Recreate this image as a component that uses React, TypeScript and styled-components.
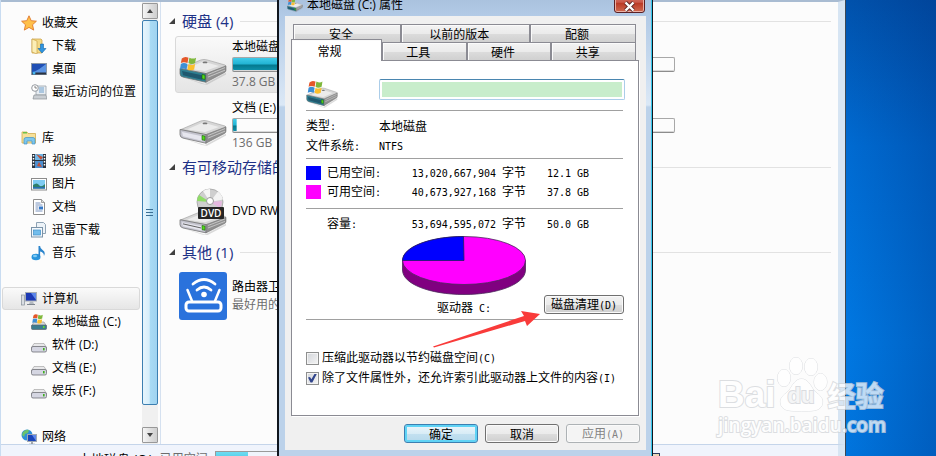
import React from "react";
import styled, { createGlobalStyle, css } from "styled-components";

const uiFont = '"Open Sans", "Noto Sans CJK SC", sans-serif';
const cjkFont = '"Noto Sans CJK SC", sans-serif';

const GlobalStyle = createGlobalStyle`
  * { box-sizing: border-box; }
  body { margin: 0; overflow: hidden; }
  button, input { font: inherit; margin: 0; }
  a { color: inherit; text-decoration: none; }
`;

/* ---------- desktop and explorer window ---------- */

const Desktop = styled.div`
  position: relative;
  display: flex;
  height: 100vh;
  padding-right: 90px;
  overflow: hidden;
  font: 12px/16px ${uiFont};
  color: #000;
  background: linear-gradient(to left, rgba(0, 35, 110, 0.28), rgba(0, 35, 110, 0) 90px),
    linear-gradient(#0152ac, #006bd2 32%, #0078e2 75%, #0074dd);
`;

const ExplorerWindow = styled.main`
  flex: 1;
  min-width: 0;
  display: flex;
  flex-direction: column;
  background: #fcfcfc;
  border-left: 1px solid #c9dcf1;
  border-right: 1px solid #3d4956;
`;

const ExplorerBody = styled.div`
  flex: 1;
  min-height: 0;
  display: flex;
  border-top: 2px solid #a9bcd2;
  border-right: 7px solid #d7e5f3;
`;

const Sidebar = styled.nav`
  width: 141px;
  flex: none;
  padding: 9px 2px 0 1px;
  overflow: hidden;
`;

const NavList = styled.ul`
  list-style: none;
  margin: 0 0 23px;
  padding: 0;
`;

const NavLink = styled.a<{ $nested?: boolean; $selected?: boolean }>`
  display: flex;
  align-items: center;
  gap: 5px;
  height: 23px;
  padding-left: ${(p) => (p.$nested ? 28 : 18)}px;
  border: 1px solid transparent;
  white-space: nowrap;
  ${(p) =>
    p.$selected &&
    css`
      border-color: #d9d9d9;
      border-radius: 3px;
      background: linear-gradient(#fafafa, #e6e6e6);
    `}
  svg { flex: none; }
`;

const Scrollbar = styled.div`
  width: 16px;
  flex: none;
  display: flex;
  flex-direction: column;
  background: #f0f0f0;
  padding: 1px 0;
`;

const ScrollButton = styled.button`
  height: 16px;
  padding: 0;
  flex: none;
  display: grid;
  place-items: center;
  border: 1px solid #989898;
  border-radius: 1px;
  background: linear-gradient(to right, #f5f5f5, #dcdcdc 60%, #cfcfcf);
`;

const ScrollThumb = styled.div`
  flex: 1;
  display: grid;
  place-items: center;
  margin: 1px 0 22px;
  border: 1px solid #3c7fb1;
  border-radius: 2px;
  background: linear-gradient(to right, #e6f5fd, #d5eefb 45%, #a9dbf5 50%, #a0d3f0);
`;

const Content = styled.section`
  flex: 1;
  min-width: 0;
  margin-left: 2px;
  padding: 6px 7px 0 8px;
  border-left: 1px solid #d5e1f0;
`;

const GroupHeader = styled.h2`
  display: flex;
  align-items: center;
  gap: 7px;
  height: 26px;
  margin: 0 0 2px;
  font-size: 15px;
  font-weight: 400;
  color: #1e3287;
  white-space: nowrap;
  &::after {
    content: "";
    flex: 1;
    height: 1px;
    background: #e2e2e2;
  }
`;

const TileGrid = styled.div`
  display: grid;
  grid-template-columns: 250px 250px;
  column-gap: 8px;
  row-gap: 4px;
  padding-left: 6px;
`;

const Tile = styled.div<{ $selected?: boolean }>`
  display: flex;
  align-items: center;
  gap: 5px;
  height: 57px;
  padding: 0 3px;
  border: 1px solid transparent;
  white-space: nowrap;
  ${(p) =>
    p.$selected &&
    css`
      border-color: #d9d9d9;
      border-radius: 3px;
      background: linear-gradient(#fafafa, #e5e5e5);
    `}
  svg { flex: none; }
`;

const TileText = styled.div`
  flex: 1;
  max-width: 185px;
  display: flex;
  flex-direction: column;
  gap: 2px;
`;

const Muted = styled.span`
  color: #6d6d6d;
`;

const CapacityBar = styled.div<{ $fill: number }>`
  height: 15px;
  border: 1px solid #a8a8a8;
  border-bottom-color: #8c8c8c;
  border-radius: 2px;
  box-shadow: inset 0 -1px #d8d8d8;
  background: linear-gradient(#41cbe8, #22b4d4 45%, #04798f 55%, #1093ad) no-repeat 0 0 /
    ${(p) => p.$fill}% 100%;
`;

const LoneBar = styled.div`
  margin: 21px 0 0 56px;
  width: 186px;
`;

const StatusBar = styled.footer`
  display: flex;
  align-items: flex-start;
  gap: 7px;
  height: 12px;
  padding: 6px 178px 0 77px;
  overflow: hidden;
  white-space: nowrap;
  border-top: 1px solid #c5d5ea;
  border-right: 7px solid #d7e5f3;
  background: #f0f4fc;
`;

const StatusName = styled.span`
  font-size: 13px;
`;

const StatusMeter = styled.div`
  width: 120px;
  height: 16px;
  border: 1px solid #9a9a9a;
  background: linear-gradient(#6fdcf2, #30bddb) no-repeat 0 0 / 32px 100%;
`;

const StatusEmblem = styled.span`
  width: 16px;
  height: 16px;
  margin: 2px 0 0 auto;
  border: 1px solid #2b3a5c;
  background: linear-gradient(to right, #cfe3f6, #f3d3a8);
`;

/* ---------- properties dialog ---------- */

const Dialog = styled.section`
  position: absolute;
  left: 277px;
  top: -14px;
  width: 376px;
  height: 480px;
  padding: 0 6px;
  font: 12px/16px ${cjkFont};
  border: 1px solid #10161e;
  border-left-width: 2px;
  border-top: 0;
  box-shadow: inset -1px 0 #35c7ec;
  background: linear-gradient(#a3bcd8, #b2cae6 30px, #dbe8f6 119px, #bcd2ea 121px, #bcd2ea);
`;

const TitleBar = styled.header`
  display: flex;
  align-items: flex-end;
  gap: 4px;
  height: 30px;
  padding: 0 1px 2px 2px;
  font-family: ${uiFont};
`;

const DialogTitle = styled.h1`
  flex: 1;
  margin: 0;
  font-size: 12px;
  line-height: 18px;
  font-weight: 400;
`;

const CloseButton = styled.button`
  width: 31px;
  height: 26px;
  margin-bottom: 1px;
  padding: 12px 0 0;
  display: grid;
  place-items: center;
  border: 1px solid #5b2024;
  border-radius: 0 0 3px 3px;
  box-shadow: inset 0 0 0 1px #eab0a4;
  background: linear-gradient(#e7a092, #c9584a 60%, #b93824 62%, #d06a50);
`;

const Client = styled.div`
  height: 434px;
  padding: 8px 7px 7px 6px;
  background: #f0f0f0;
`;

const BackTabs = styled.div`
  display: flex;
  height: 18px;
  margin: 0 3px 0 2px;
`;

const FrontTabs = styled.div`
  display: flex;
  height: 18px;
  margin-right: 3px;
`;

const Tab = styled.button<{ $grow?: number; $active?: boolean }>`
  flex: ${(p) => p.$grow ?? 1} 1 0;
  min-width: 0;
  padding: 0 12px 0 0;
  border: 1px solid #8b8b93;
  border-bottom: 0;
  background: linear-gradient(#f3f3f3, #ebebeb 50%, #dcdcdc 52%, #d0d0d0);
  box-shadow: inset 1px 1px #fbfbfb;
  & + & { border-left-width: 1px; }
  ${(p) =>
    p.$active &&
    css`
      flex: 0 0 91px;
      height: 22px;
      margin-top: -3px;
      padding-right: 14px;
      position: relative;
      z-index: 1;
      background: #fff;
      & + button { border-left-width: 0; }
    `}
`;

const Panel = styled.div`
  padding: 0 15px 0 14px;
  height: 356px;
  border: 1px solid #8b8b93;
  background: #fff;
  box-shadow: 1px 1px #fff;
`;

const Divider = styled.hr`
  height: 1px;
  margin: 0;
  border: 0;
  background: #a0a0a0;
`;

const VolumeRow = styled.div`
  display: flex;
  align-items: flex-start;
  justify-content: space-between;
  height: 49px;
  padding-top: 18px;
`;

const VolumeInput = styled.input`
  width: 246px;
  height: 21px;
  margin-right: -2px;
  padding: 2px;
  border: 1px solid #abcde9;
  border-top-color: #4a86b0;
  border-radius: 2px;
  background: linear-gradient(#c8edcb, #c8edcb) content-box, #fff;
`;

const Facts = styled.dl`
  display: grid;
  grid-template-columns: 73px 1fr;
  grid-auto-rows: 20px;
  align-items: center;
  margin: 0;
  padding: 5px 0 2px;
  dd { margin: 0; }
`;

const Mono = styled.span`
  font: 10px/16px "DejaVu Sans Mono", monospace;
`;

const SpaceTable = styled.table<{ $top: number; $bottom: number }>`
  width: 100%;
  table-layout: fixed;
  border-collapse: collapse;
  margin: ${(p) => p.$top}px 0 ${(p) => p.$bottom}px;
  th, td { height: 19px; padding: 0; font-weight: 400; text-align: left; white-space: nowrap; }
`;

const SwatchCell = styled.td`
  width: 21px;
`;

const NameCell = styled.th`
  width: 72px;
`;

const BytesCell = styled.td`
  width: 127px;
  && { text-align: right; }
`;

const SizeCell = styled.td`
  && { padding-left: 21px; }
`;

const Swatch = styled.span<{ $color: string }>`
  display: block;
  width: 15px;
  height: 14px;
  background: ${(p) => p.$color};
`;

const ChartRow = styled.div`
  display: grid;
  grid-template-columns: 96px 124px 1fr;
  align-items: end;
  padding-top: 3px;
`;

const Chart = styled.figure`
  grid-column: 2;
  margin: 0;
  text-align: center;
  svg { display: block; }
`;

const Caption = styled.figcaption`
  padding: 4px 0 2px;
`;

const Button = styled.button<{ $kind?: "default" | "disabled" }>`
  width: 74px;
  height: 19px;
  padding: 0;
  line-height: 16px;
  color: #000;
  border: 1px solid #707070;
  border-radius: 3px;
  box-shadow: inset 0 0 0 1px #fafafa;
  background: linear-gradient(#f2f2f2, #ebebeb 50%, #dddddd 52%, #cfcfcf);
  ${(p) =>
    p.$kind === "default" &&
    css`
      border-color: #3c7fb1;
      box-shadow: inset 0 0 0 2px #5fd3f5;
      background: linear-gradient(#edf6fb, #d8ecf6 50%, #c3e0f0 52%, #b5d9ec);
    `}
  ${(p) =>
    p.$kind === "disabled" &&
    css`
      color: #838383;
      border-color: #adb2b5;
      background: #f4f4f4;
    `}
`;

const CleanupButton = styled(Button)`
  width: 80px;
  margin: 0 -1px 5px;
  justify-self: end;
`;

const Options = styled.div`
  padding-top: 28px;
`;

const Option = styled.label`
  display: flex;
  align-items: center;
  gap: 3px;
  height: 20px;
  white-space: nowrap;
`;

const CheckBox = styled.input`
  appearance: none;
  width: 13px;
  height: 13px;
  flex: none;
  display: grid;
  place-items: center;
  border: 1px solid #8e8f8f;
  background: linear-gradient(135deg, #d2d5da, #f4f4f4);
  box-shadow: inset 0 0 0 1px #f4f4f4;
  &:checked::before {
    content: "";
    width: 9px;
    height: 9px;
    background: #31458c;
    clip-path: polygon(0 45%, 22% 40%, 38% 65%, 75% 0, 100% 0, 48% 100%, 28% 100%);
  }
`;

const DialogButtons = styled.div`
  display: flex;
  justify-content: flex-end;
  gap: 7px;
  margin: 8px -1px 0 0;
`;

const Arrow = styled.svg`
  position: absolute;
  left: 432px;
  top: 308px;
`;

/* ---------- watermark ---------- */

const Watermark = styled.div`
  position: absolute;
  right: 46px;
  bottom: 18px;
  width: 172px;
  color: #fff;
  opacity: 0.75;
  white-space: nowrap;
  -webkit-text-stroke: 2px #d2d5d9;
  paint-order: stroke fill;
`;

const Brand = styled.div`
  display: flex;
  align-items: flex-end;
  height: 56px;
  font: 700 37px/34px "Liberation Sans", sans-serif;
`;

const Paw = styled.span`
  position: relative;
  width: 52px;
  height: 56px;
  svg { display: block; }
`;

const PawText = styled.span`
  position: absolute;
  left: 12px;
  top: 28px;
  font-size: 22px;
  line-height: 24px;
  color: #f2f3f4;
  -webkit-text-stroke: 2px #cfd2d7;
`;

const BrandCjk = styled.span`
  font: 700 28px/34px ${cjkFont};
`;

const Site = styled.div`
  font: 600 19px/26px "Open Sans", sans-serif;
`;

/* ---------- icons ---------- */

const FlagShapes = () => (
  <g>
    <path d="M4 4q3-3 7-1l-1 6q-4-2-7 0z" fill="#e4572a" />
    <path d="M12 3q4 2 7 0l-1 6q-4 2-7 0z" fill="#7fb83c" />
    <path d="M3 10q3-2 7 0l-1 6q-4-2-7 0z" fill="#3d8fd6" />
    <path d="M11 10q3 2 7 0l-1 6q-4 2-7 0z" fill="#fbbf2d" />
  </g>
);

const DriveShapes = ({ teal }: { teal?: boolean }) => (
  <g strokeLinejoin="round">
    <path d="M3 28l23 8 21-13v2L28 37l-5-1z" fill="#999" opacity=".35" />
    <path d="M2 18L22 8q3-1 6 0l18 6q2 1 0 2L27 24z" fill="#d6d6d6" stroke="#a0a0a0" strokeWidth=".7" />
    <path d="M8 18l16-8 16 5-14 6z" fill="#ececec" />
    <ellipse cx="26" cy="11" rx="2.500" ry="1" fill="#777" />
    <path d="M1 18l26 6v10L4 28q-3-1-3-4z" fill={teal ? "#2e7f92" : "#c4c4ce"} stroke="#6c6c6c" strokeWidth=".8" />
    <path d="M3 21l20 5v5L4 26z" fill={teal ? "#20586e" : "#e6e6ee"} />
    <path d="M27 24l20-9v5q0 2-2 3L27 34z" fill="#8f8f8f" stroke="#707070" strokeWidth=".6" />
    <path d="M29 25l17-8M29 28l17-8" stroke="#c9c9c9" />
    <path d="M23 25l3 .7v5L23 30z" fill="#52dc18" stroke="#1e5e10" strokeWidth=".7" />
  </g>
);

const BigDrive = ({ flag }: { flag?: boolean }) => (
  <svg width="48" height="48" viewBox="0 0 48 48" aria-hidden="true">
    <g transform="translate(0 12) scale(1 .86)"><DriveShapes teal={flag} /></g>
    {flag && <g transform="translate(-1 14) scale(.95 .9)"><FlagShapes /></g>}
  </svg>
);

const DialogDrive = ({ size }: { size: number }) => (
  <svg width={size} height={size} viewBox="0 -3 48 48" aria-hidden="true">
    <g transform="translate(0 3)"><DriveShapes teal /></g>
    <g transform="translate(0 -3) scale(1.3)"><FlagShapes /></g>
  </svg>
);

const DvdDrive = () => (
  <svg width="48" height="48" viewBox="0 0 48 48" aria-hidden="true">
    <g transform="translate(0 18) scale(1 .82)">
      <DriveShapes />
      <path d="M4 23l18 5" stroke="#555" />
    </g>
    <circle cx="31" cy="15" r="13" fill="#cfcfcf" stroke="#9a9a9a" strokeWidth=".7" />
    <path d="M31 15L20 8q-2 3-2 6z" fill="#8fdc67" />
    <path d="M31 15L39 4.500q4 3 5 8z" fill="#f3f3f3" />
    <path d="M31 15L24 4q3-2 7-2z" fill="#f5f5f5" />
    <path d="M31 15l12-1q0 4-2 7z" fill="#e4b8e0" />
    <circle cx="31" cy="14" r="3.500" fill="#fff" stroke="#999" />
    <rect x="19" y="20" width="26" height="12" rx="1" fill="#262626" />
    <text x="32" y="30" textAnchor="middle" fontFamily="Open Sans, sans-serif" fontSize="10" fontWeight="600" fill="#fff">DVD</text>
  </svg>
);

const RouterIcon = () => (
  <svg width="48" height="48" viewBox="0 0 48 48" fill="none" stroke="#fff" strokeLinecap="round" aria-hidden="true">
    <rect width="48" height="48" rx="3" fill="#2a72dc" stroke="none" />
    <rect x="7" y="30" width="35" height="9" rx="3" strokeWidth="3" />
    <path d="M13 29L8.500 18M36 29l4.500-11" strokeWidth="2.500" />
    <path d="M14 12q11-9 22 0M18 18q7-6 14 0" strokeWidth="2.800" />
    <circle cx="25" cy="22.500" r="2.800" fill="#fff" stroke="none" />
  </svg>
);

const paths: Record<string, React.ReactNode> = {
  star: <path d="M8 .8l2.200 4.900 5.200.5-3.900 3.600 1.200 5.300L8 12.400l-4.700 2.700 1.200-5.300L.6 6.200l5.200-.5z" fill="#ffc04a" stroke="#e0772a" strokeWidth=".9" />,
  download: (
    <>
      <path d="M1 1h9l1 1v13H1z" fill="#f3d987" stroke="#c79c3d" strokeWidth=".7" />
      <path d="M1 1l5 2v13l-5-2z" fill="#fbeeb6" stroke="#c79c3d" strokeWidth=".6" />
      <path d="M9.500 6h3v4.500H15L11 15 7 10.500h2.500z" fill="#2f95e0" stroke="#1566a8" strokeWidth=".6" />
    </>
  ),
  desktop: (
    <>
      <rect x=".5" y="2.500" width="15" height="11" fill="#1f4fb4" stroke="#8a98a8" />
      <path d="M1 12Q8 9 15 3v9z" fill="#5b93e2" />
      <rect x="1" y="11.500" width="14" height="2" fill="#2a3340" />
      <circle cx="3" cy="12" r="1.500" fill="#49b5ef" />
    </>
  ),
  recent: (
    <>
      <path d="M5 2h10v9H5z" fill="#e8edf2" stroke="#98a1aa" strokeWidth=".8" />
      <path d="M8 4h5M8 6h5M8 8h5" stroke="#6fa0cc" />
      <path d="M3 11h12l1 4H2z" fill="#c9ced3" stroke="#8a9096" strokeWidth=".7" />
      <circle cx="4" cy="4" r="3.300" fill="#fff" stroke="#8a9096" strokeWidth=".9" />
      <path d="M4 2v2h2" fill="none" stroke="#555" strokeWidth=".7" />
    </>
  ),
  library: (
    <>
      <path d="M1 2h5l1 1.500h7.500V13H1z" fill="#f7e19a" stroke="#d2ac4e" strokeWidth=".8" />
      <path d="M2 2h4v1.500H2z" fill="#6cc04a" />
      <path d="M3 14V9.500Q3 7.500 5 7.500h7q2 0 2 2V14h-3v-3H6v3z" fill="#7cc7ee" stroke="#4593c4" strokeWidth=".7" />
    </>
  ),
  video: (
    <>
      <rect x="1" y="1" width="14" height="14" fill="#2c3440" />
      <path d="M4 1h8v6H4z" fill="#71b6e6" />
      <path d="M4 8h8v7H4z" fill="#4c8fd0" />
      <path d="M5 1l5 6 2-3zM6 13l2-4 3 5z" fill="#c0513a" />
      <path d="M2.500 2v12M13.500 2v12" stroke="#fff" strokeWidth="1.500" strokeDasharray="1.500 1.500" />
    </>
  ),
  picture: (
    <>
      <rect x=".5" y="2.500" width="15" height="11.500" fill="#fff" stroke="#8c8c8c" />
      <rect x="2" y="4" width="12" height="8.500" fill="#7ecbf2" />
      <path d="M2 9q4-3 6 0t6-1v4.500H2z" fill="#2f7f6a" />
      <path d="M2 11h12v1.500H2z" fill="#2a6fb4" />
    </>
  ),
  document: (
    <>
      <path d="M2.500.5h8l3 3v12h-11z" fill="#fff" stroke="#8d8d8d" />
      <path d="M10.500.5v3h3" fill="#ddd" stroke="#8d8d8d" strokeWidth=".8" />
      <path d="M4.500 4h5M4.500 6h7M4.500 8h3M4.500 10h3M4.500 12h7" stroke="#6b88b8" strokeWidth=".9" />
      <rect x="8" y="7.500" width="4" height="3" fill="#3579c8" />
    </>
  ),
  thunder: (
    <>
      <path d="M5.500.5h7l2 2v9h-9z" fill="#edf3f8" stroke="#8ea3b5" />
      <rect x=".5" y="5.500" width="11" height="9.500" fill="#f5f9fc" stroke="#7b93a8" />
      <rect x="2.500" y="8" width="7" height="5" fill="#72bdec" stroke="#3f8fc8" strokeWidth=".7" />
    </>
  ),
  music: (
    <>
      <ellipse cx="5" cy="12" rx="4.500" ry="3.300" fill="#2a95dc" />
      <path d="M7.500 12V1h1.600q0 2.500 2.500 4 3.500 2.200 1.300 6 .3-3.500-3.800-4.500V12z" fill="#2a84cc" />
      <ellipse cx="4" cy="11" rx="2" ry="1.200" fill="#7fcaf4" />
    </>
  ),
  computer: (
    <>
      <rect x=".5" y="4" width="3" height="10" fill="#d9dde2" stroke="#87909a" strokeWidth=".7" />
      <rect x="4.500" y="1.500" width="11" height="8.500" fill="#1c39b4" stroke="#a6adb5" />
      <path d="M10 2h5v7z" fill="#5c86ea" />
      <path d="M9 10.500h3l1 2.500H8z" fill="#b4bac1" />
      <path d="M6 13.500h8" stroke="#7e858e" />
    </>
  ),
  systemDrive: (
    <>
      <path d="M3 8h10l2.500 4H.5z" fill="#d7dadd" stroke="#8c8c8c" strokeWidth=".6" />
      <rect x=".5" y="11" width="15" height="4.500" rx="1" fill="#3c7d90" stroke="#596670" strokeWidth=".7" />
      <rect x="12" y="12" width="1.500" height="2" fill="#5ee02c" />
      <g transform="translate(0 -1) scale(.62)"><FlagShapes /></g>
    </>
  ),
  drive: (
    <>
      <path d="M3 6.500h10l2.500 4H.5z" fill="#e8e8ea" stroke="#9c9c9c" strokeWidth=".6" />
      <rect x=".5" y="9.500" width="15" height="5.500" rx="1.500" fill="#d5d6e2" stroke="#6f7076" strokeWidth=".8" />
      <rect x="12" y="11" width="1.600" height="2.400" fill="#3fae1e" />
    </>
  ),
  network: (
    <>
      <circle cx="6" cy="6" r="5.500" fill="#2f8fd8" />
      <path d="M2 3q3-3 6-2l-1 3-3 1-1 3-2-2zM6 7l3-1v4l-3 1z" fill="#6cc36a" />
      <rect x="6.500" y="5.500" width="9" height="7" fill="#1a44b8" stroke="#a0a8b2" />
      <path d="M11 6h4v6z" fill="#5c86ea" />
      <path d="M11 13v2M8 15.500h6" stroke="#808891" strokeWidth="1.400" />
    </>
  ),
};

const SmallIcon = ({ name }: { name: string }) => (
  <svg width="16" height="16" viewBox="0 0 16 16" aria-hidden="true">{paths[name]}</svg>
);

const Expander = () => (
  <svg width="6" height="6" viewBox="0 0 6 6" aria-hidden="true"><path d="M6 0v6H0z" fill="#404040" /></svg>
);

const PieChart = () => (
  <svg width="124" height="59" viewBox="0 0 124 59" role="img" aria-label="驱动器 C:">
    <path d="M.5 24.500V34C.5 48 28 58.500 62 58.500S123.500 48 123.500 34v-9.500z" fill="#800080" stroke="#4a2a5a" strokeWidth=".8" />
    <ellipse cx="62" cy="24.500" rx="61.500" ry="24" fill="#f0f" stroke="#4a2a5a" strokeWidth=".8" />
    <path d="M62 24.500H.5C.5 11 28 .5 61.500.5z" fill="#00f" stroke="#202060" strokeWidth=".8" />
  </svg>
);

/* ---------- data ---------- */

type NavItem = { icon: string; label: string; selected?: boolean };

const navGroups: NavItem[][] = [
  [
    { icon: "star", label: "收藏夹" },
    { icon: "download", label: "下载" },
    { icon: "desktop", label: "桌面" },
    { icon: "recent", label: "最近访问的位置" },
  ],
  [
    { icon: "library", label: "库" },
    { icon: "video", label: "视频" },
    { icon: "picture", label: "图片" },
    { icon: "document", label: "文档" },
    { icon: "thunder", label: "迅雷下载" },
    { icon: "music", label: "音乐" },
  ],
  [
    { icon: "computer", label: "计算机", selected: true },
    { icon: "systemDrive", label: "本地磁盘 (C:)" },
    { icon: "drive", label: "软件 (D:)" },
    { icon: "drive", label: "文档 (E:)" },
    { icon: "drive", label: "娱乐 (F:)" },
  ],
  [{ icon: "network", label: "网络" }],
];

const usage = [
  { color: "#00f", label: "已用空间", bytes: "13,020,667,904", size: "12.1 GB" },
  { color: "#f0f", label: "可用空间", bytes: "40,673,927,168", size: "37.8 GB" },
];

const total = [{ color: "", label: "容量", bytes: "53,694,595,072", size: "50.0 GB" }];

const SpaceRows = ({ rows, top, bottom }: { rows: typeof usage; top: number; bottom: number }) => (
  <SpaceTable $top={top} $bottom={bottom}>
    <tbody>
      {rows.map((r) => (
        <tr key={r.label}>
          <SwatchCell>{r.color && <Swatch $color={r.color} />}</SwatchCell>
          <NameCell scope="row">{r.label}<Mono>:</Mono></NameCell>
          <BytesCell><Mono>{r.bytes} </Mono>字节</BytesCell>
          <SizeCell><Mono>{r.size}</Mono></SizeCell>
        </tr>
      ))}
    </tbody>
  </SpaceTable>
);

const Explorer = () => (
  <ExplorerWindow>
    <ExplorerBody>
      <Sidebar>
        {navGroups.map((group) => (
          <NavList key={group[0].label}>
            {group.map((item, i) => (
              <li key={item.label}>
                <NavLink href="#" $nested={i > 0} $selected={item.selected}>
                  <SmallIcon name={item.icon} />
                  {item.label}
                </NavLink>
              </li>
            ))}
          </NavList>
        ))}
      </Sidebar>
      <Scrollbar>
        <ScrollButton aria-label="向上滚动">
          <svg width="6" height="4" viewBox="0 0 6 4"><path d="M0 4l3-4 3 4z" fill="#444" /></svg>
        </ScrollButton>
        <ScrollThumb>
          <svg width="8" height="9" viewBox="0 0 8 9"><path d="M0 1.500h7M0 4.500h7M0 7.500h7" stroke="#3c6f94" /></svg>
        </ScrollThumb>
        <ScrollButton aria-label="向下滚动">
          <svg width="6" height="4" viewBox="0 0 6 4"><path d="M0 0h6L3 4z" fill="#444" /></svg>
        </ScrollButton>
      </Scrollbar>
      <Content>
        <GroupHeader><Expander />硬盘 (4)</GroupHeader>
        <TileGrid>
          <Tile $selected>
            <BigDrive flag />
            <TileText>
              本地磁盘 (C:)
              <CapacityBar $fill={25} />
              <Muted>37.8 GB</Muted>
            </TileText>
          </Tile>
          <LoneBar><CapacityBar $fill={0} /></LoneBar>
          <Tile>
            <BigDrive />
            <TileText>
              文档 (E:)
              <CapacityBar $fill={2} />
              <Muted>136 GB</Muted>
            </TileText>
          </Tile>
          <LoneBar><CapacityBar $fill={0} /></LoneBar>
        </TileGrid>
        <GroupHeader><Expander />有可移动存储的</GroupHeader>
        <TileGrid>
          <Tile><DvdDrive />DVD RW</Tile>
        </TileGrid>
        <GroupHeader><Expander />其他 (1)</GroupHeader>
        <TileGrid>
          <Tile>
            <RouterIcon />
            <TileText>
              路由器卫
              <Muted>最好用的</Muted>
            </TileText>
          </Tile>
        </TileGrid>
      </Content>
    </ExplorerBody>
    <StatusBar>
      <StatusName>本地磁盘 (C:)</StatusName>
      <Muted>已用空间</Muted>
      <StatusMeter />
      <StatusEmblem />
    </StatusBar>
  </ExplorerWindow>
);

const PropertiesDialog = () => (
  <Dialog role="dialog" aria-labelledby="dialog-title">
    <TitleBar>
      <DialogDrive size={16} />
      <DialogTitle id="dialog-title">本地磁盘 (C:) 属性</DialogTitle>
      <CloseButton aria-label="关闭">
        <svg width="13" height="11" viewBox="0 0 13 11">
          <path d="M2.500 1.500l8 8m0-8l-8 8" stroke="#5a2a2a" strokeWidth="4" />
          <path d="M2.500 1.500l8 8m0-8l-8 8" stroke="#fff" strokeWidth="2.400" />
        </svg>
      </CloseButton>
    </TitleBar>
    <Client>
      <BackTabs>
        <Tab $grow={107}>安全</Tab>
        <Tab $grow={131}>以前的版本</Tab>
        <Tab $grow={105}>配额</Tab>
      </BackTabs>
      <FrontTabs>
        <Tab $active>常规</Tab>
        <Tab>工具</Tab>
        <Tab>硬件</Tab>
        <Tab>共享</Tab>
      </FrontTabs>
      <Panel>
        <VolumeRow>
          <DialogDrive size={32} />
          <VolumeInput aria-label="卷标" />
        </VolumeRow>
        <Divider />
        <Facts>
          <dt>类型<Mono>:</Mono></dt>
          <dd>本地磁盘</dd>
          <dt>文件系统<Mono>:</Mono></dt>
          <dd><Mono>NTFS</Mono></dd>
        </Facts>
        <Divider />
        <SpaceRows rows={usage} top={4} bottom={7} />
        <Divider />
        <SpaceRows rows={total} top={5} bottom={0} />
        <ChartRow>
          <Chart>
            <PieChart />
            <Caption>驱动器<Mono> C:</Mono></Caption>
          </Chart>
          <CleanupButton>磁盘清理<Mono>(D)</Mono></CleanupButton>
        </ChartRow>
        <Divider />
        <Options>
          <Option>
            <CheckBox type="checkbox" />
            <span>压缩此驱动器以节约磁盘空间<Mono>(C)</Mono></span>
          </Option>
          <Option>
            <CheckBox type="checkbox" defaultChecked />
            <span>除了文件属性外，还允许索引此驱动器上文件的内容<Mono>(I)</Mono></span>
          </Option>
        </Options>
      </Panel>
      <DialogButtons>
        <Button $kind="default">确定</Button>
        <Button>取消</Button>
        <Button $kind="disabled" disabled>应用<Mono>(A)</Mono></Button>
      </DialogButtons>
    </Client>
  </Dialog>
);

export default function App() {
  return (
    <>
      <GlobalStyle />
      <Desktop>
        <Explorer />
        <PropertiesDialog />
        <Arrow width="110" height="42" viewBox="432 308 110 42" aria-hidden="true">
          <path d="M433 346.500L524 316l-3-5 19 3-13 12-2-5-91 26.500z" fill="#f93b3a" />
        </Arrow>
        <Watermark>
          <Brand>
            <span>Bai</span>
            <Paw>
              <svg width="52" height="56" viewBox="0 0 52 56" fill="#fff" stroke="#d2d5d9">
                <ellipse cx="8" cy="22" rx="6.500" ry="8.500" />
                <ellipse cx="20" cy="10" rx="6.500" ry="8.500" />
                <ellipse cx="35" cy="11" rx="6.500" ry="8.500" />
                <ellipse cx="44.500" cy="26" rx="6.500" ry="8.500" />
                <path d="M25.500 23c6 0 9 6 12 11 4 4 10 7 9 13-1 9-12 8-21 8s-20 1-21-8c-1-6 5-9 9-13 3-5 6-11 12-11z" />
              </svg>
              <PawText>du</PawText>
            </Paw>
            <BrandCjk>经验</BrandCjk>
          </Brand>
          <Site>jingyan.baidu.com</Site>
        </Watermark>
      </Desktop>
    </>
  );
}
